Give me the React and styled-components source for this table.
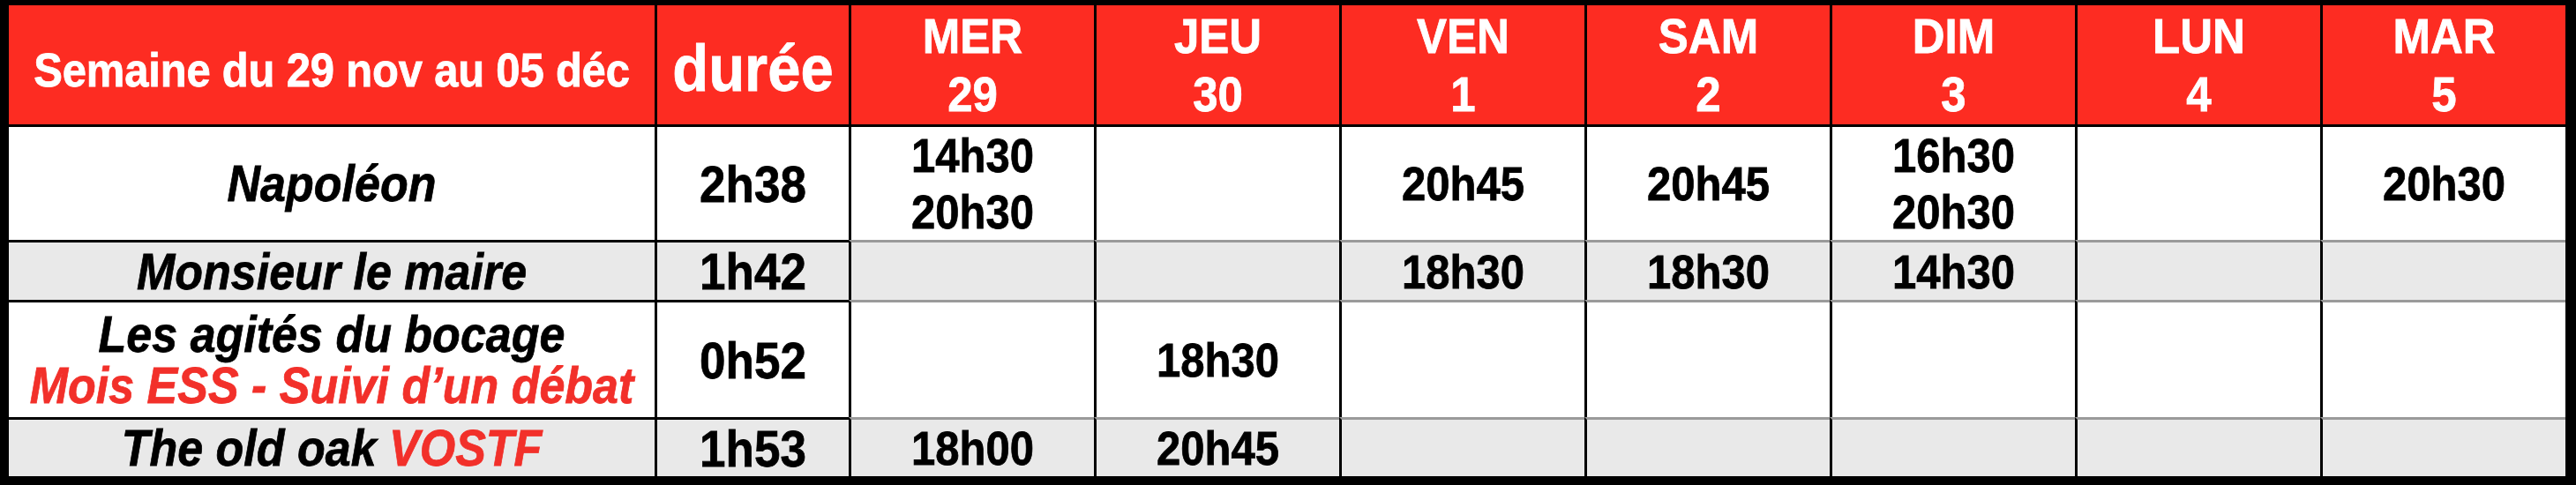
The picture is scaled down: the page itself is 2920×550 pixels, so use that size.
import React from 'react'
import styled, { createGlobalStyle } from 'styled-components'

const GlobalStyle = createGlobalStyle`
    html, body {
        margin: 0;
        padding: 0;
        background: #ffffff;
    }
    body {
        font-family: "Liberation Sans", Arial, sans-serif;
    }
`

const RED = '#fd2c22'

const Frame = styled.div`
    box-sizing: border-box;
    width: 2920px;
    height: 550px;
    border-style: solid;
    border-color: #000;
    border-width: 6px 12px 10px 10px;
    background: #fff;
`

const Table = styled.div`
    display: grid;
    grid-template-columns: 732px 220px repeat(7, 278px);
    grid-template-rows: 135px 131px 68px 133px 67px;
    width: 100%;
    height: 100%;
`

// the printed grid uses a tall, slightly condensed Helvetica
const Tall = styled.span`
    display: block;
    transform: scaleY(1.1);
`

const Head = styled.div`
    box-sizing: border-box;
    display: flex;
    flex-direction: column;
    align-items: center;
    justify-content: center;
    background: ${RED};
    color: #fff;
    font-weight: 700;
    text-align: center;
    -webkit-text-stroke: 0.7px #fff;
    border-left: ${(p) => (p.$first ? 'none' : '3px solid #000')};
`

const WeekLabel = styled(Tall)`
    font-size: 49px;
    letter-spacing: -0.2px;
    padding-top: 10px;
`

const DurationLabel = styled(Tall)`
    font-size: 67px;
    padding-top: 6px;
`

const DayLabel = styled(Tall)`
    font-size: 51px;
    line-height: 66px;
`

const Cell = styled.div`
    box-sizing: border-box;
    display: flex;
    flex-direction: column;
    align-items: center;
    justify-content: center;
    text-align: center;
    font-weight: 700;
    color: #000;
    -webkit-text-stroke: 0.7px currentColor;
    background: ${(p) => (p.$shade ? '#e9e9e9' : '#fff')};
    border-top: 3px solid ${(p) => (p.$dark ? '#000' : '#9a9a9a')};
    border-left: ${(p) => (p.$first ? 'none' : '3px solid #000')};
`

const Title = styled(Tall)`
    font-size: 52px;
    font-style: italic;
    line-height: 58px;
    white-space: nowrap;
`

const Red = styled.span`
    color: #f2302a;
`

const Duration = styled(Tall)`
    font-size: 53px;
`

const Time = styled(Tall)`
    font-size: 49px;
    line-height: 64px;
`

const days = [
    ['MER', '29'],
    ['JEU', '30'],
    ['VEN', '1'],
    ['SAM', '2'],
    ['DIM', '3'],
    ['LUN', '4'],
    ['MAR', '5'],
]

const films = [
    {
        title: <Title>Napoléon</Title>,
        duration: '2h38',
        times: [['14h30', '20h30'], [], ['20h45'], ['20h45'], ['16h30', '20h30'], [], ['20h30']],
    },
    {
        title: <Title>Monsieur le maire</Title>,
        duration: '1h42',
        times: [[], [], ['18h30'], ['18h30'], ['14h30'], [], []],
    },
    {
        title: (
            <>
                <Title>Les agités du bocage</Title>
                <Title>
                    <Red>Mois ESS - Suivi d’un débat</Red>
                </Title>
            </>
        ),
        duration: '0h52',
        times: [[], ['18h30'], [], [], [], [], []],
    },
    {
        title: (
            <Title>
                The old oak <Red>VOSTF</Red>
            </Title>
        ),
        duration: '1h53',
        times: [['18h00'], ['20h45'], [], [], [], [], []],
    },
]

export default function App() {
    return (
        <>
            <GlobalStyle />
            <Frame>
                <Table>
                    <Head $first>
                        <WeekLabel>Semaine du 29 nov au 05 déc</WeekLabel>
                    </Head>
                    <Head>
                        <DurationLabel>durée</DurationLabel>
                    </Head>
                    {days.map(([name, num]) => (
                        <Head key={name}>
                            <DayLabel>{name}</DayLabel>
                            <DayLabel>{num}</DayLabel>
                        </Head>
                    ))}

                    {films.map((film, i) => {
                        const shade = i % 2 === 1
                        return (
                            <React.Fragment key={i}>
                                <Cell $first $dark $shade={shade}>
                                    {film.title}
                                </Cell>
                                <Cell $dark $shade={shade}>
                                    <Duration>{film.duration}</Duration>
                                </Cell>
                                {film.times.map((list, j) => (
                                    <Cell key={j} $dark={i === 0} $shade={shade}>
                                        {list.map((t) => (
                                            <Time key={t}>{t}</Time>
                                        ))}
                                    </Cell>
                                ))}
                            </React.Fragment>
                        )
                    })}
                </Table>
            </Frame>
        </>
    )
}
